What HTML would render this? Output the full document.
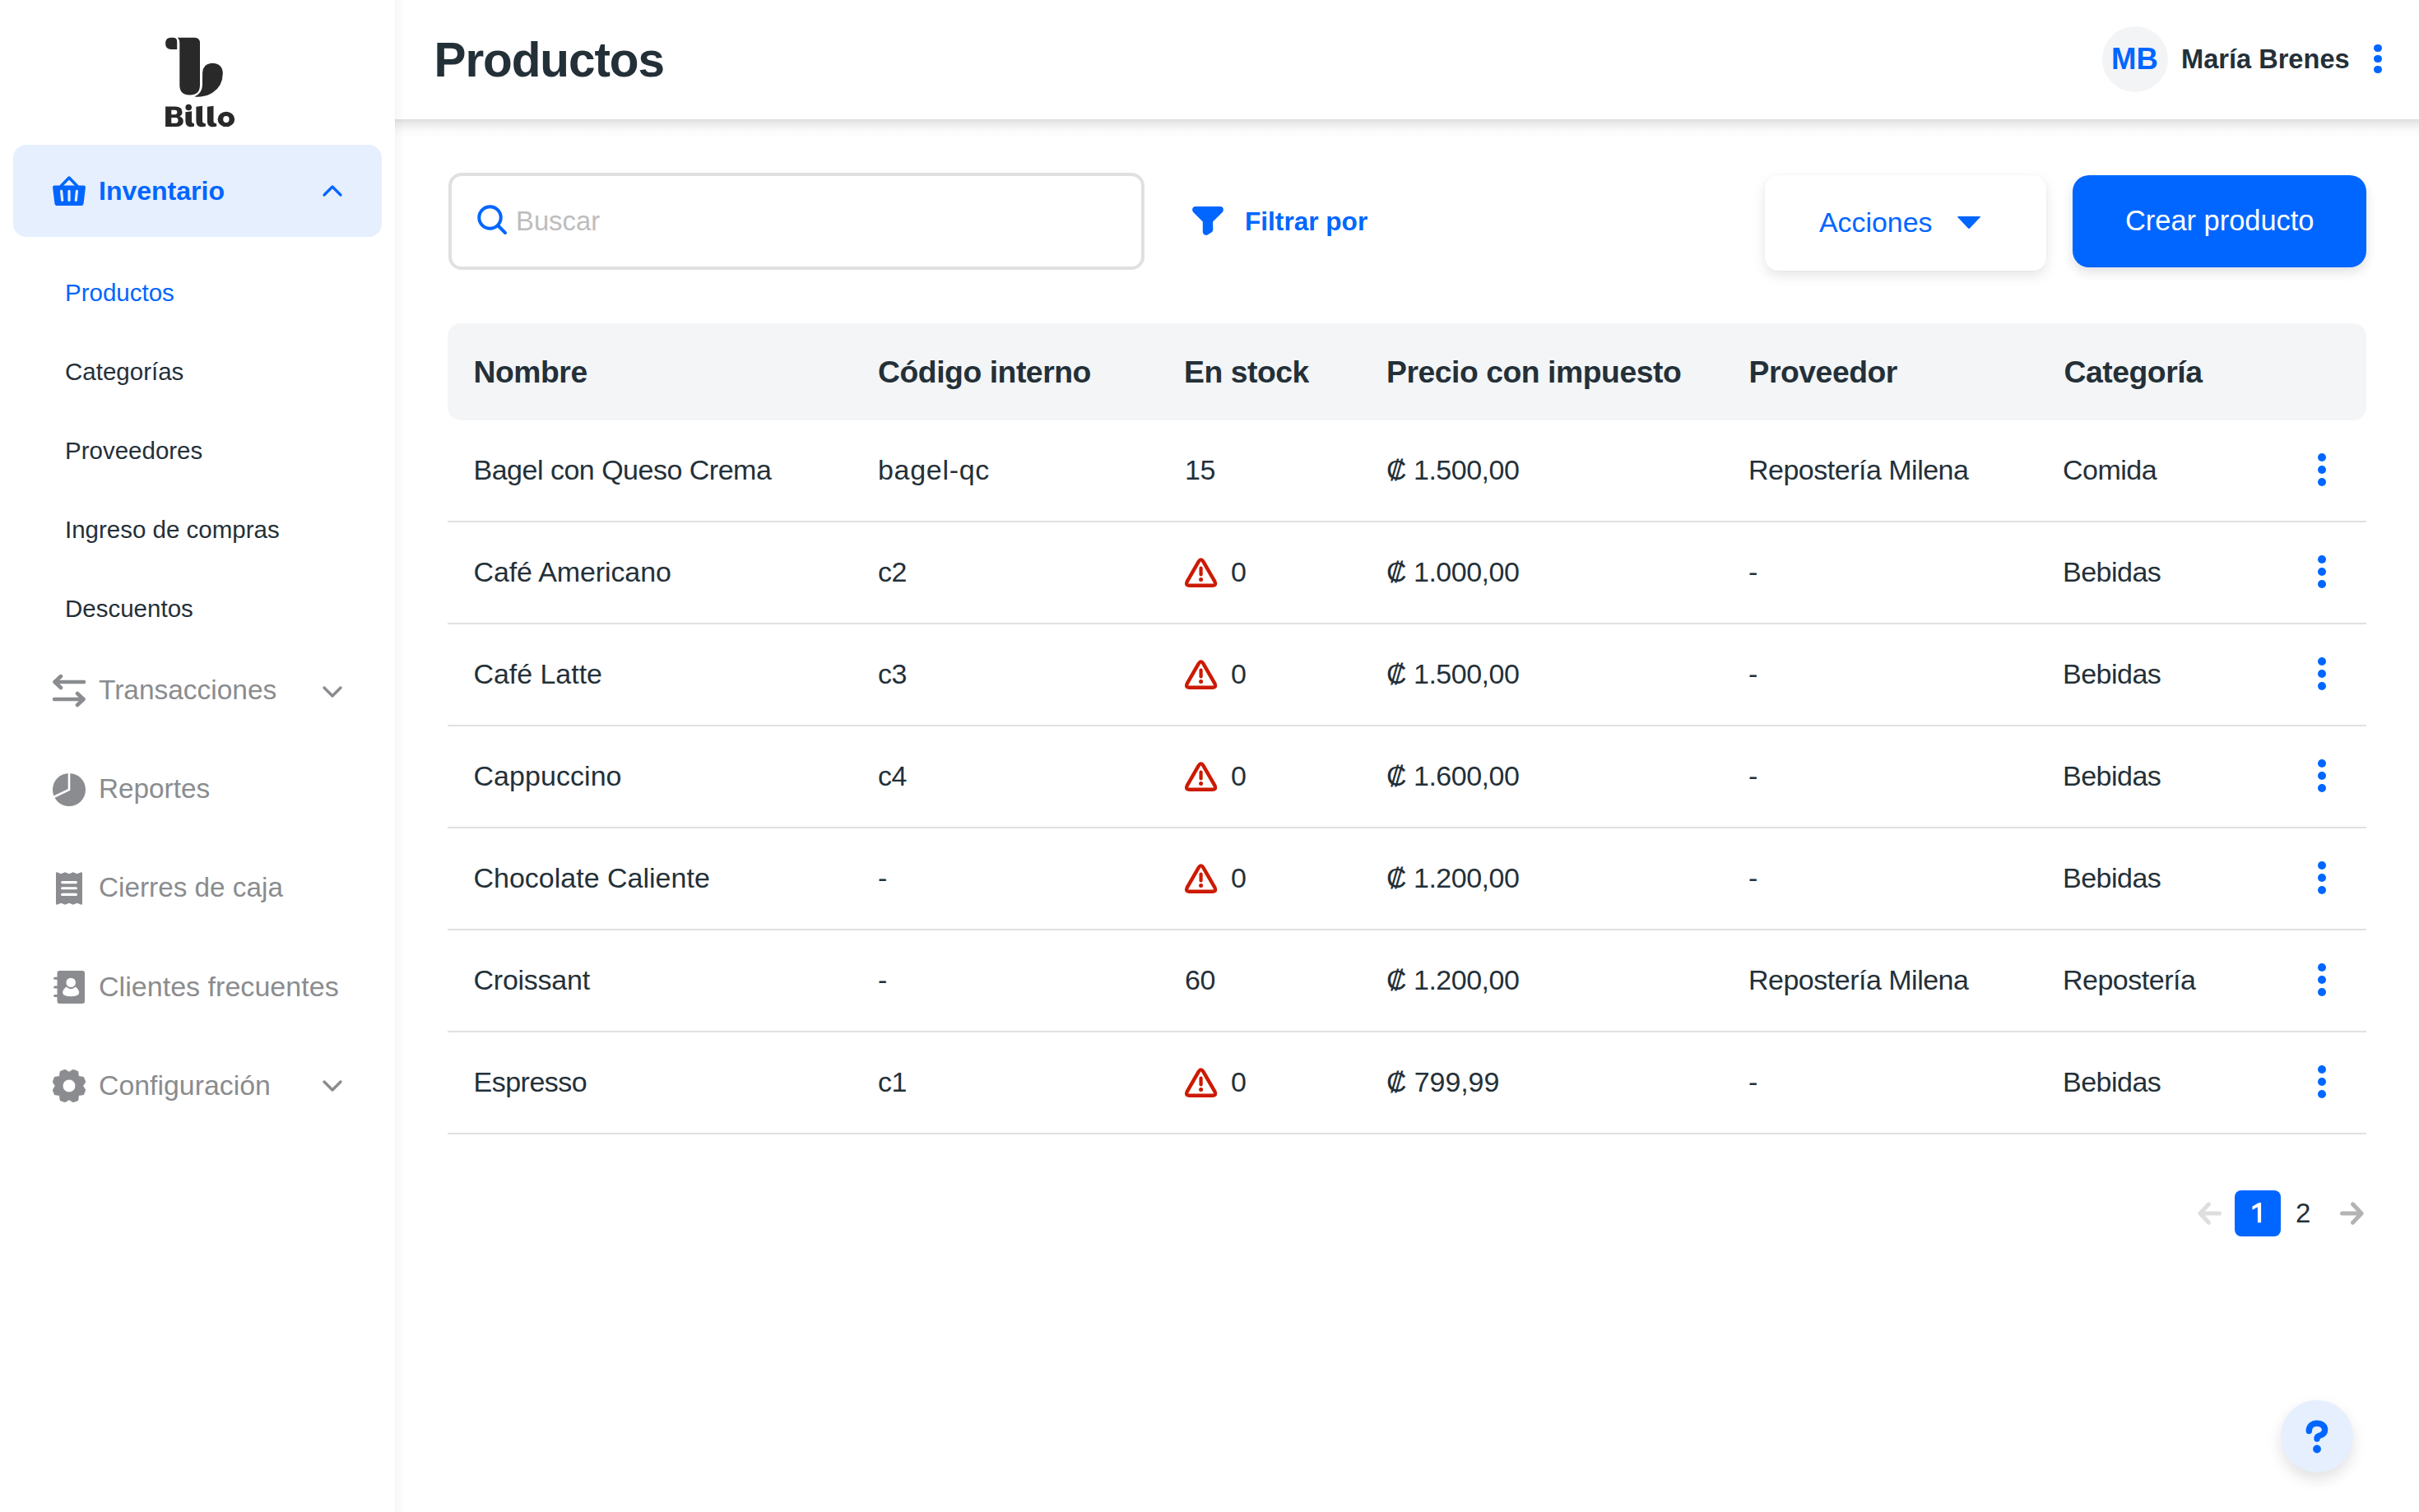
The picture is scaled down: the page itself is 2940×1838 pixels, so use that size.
<!DOCTYPE html>
<html><head><meta charset="utf-8"><title>Productos</title>
<style>
html,body{margin:0;padding:0;background:#fff;}
body{width:2940px;height:1838px;position:relative;overflow:hidden;font-family:"Liberation Sans",sans-serif;}
.abs{position:absolute;}
.t{position:absolute;white-space:nowrap;}
#sidebar{position:absolute;left:0;top:0;width:480px;height:1838px;background:#fff;}
#header{position:absolute;left:480px;top:0;width:2460px;height:145px;background:#fff;}
#hshadow{position:absolute;left:480px;top:145px;width:2460px;height:24px;background:linear-gradient(to bottom,rgba(0,0,0,0.135) 0px,rgba(0,0,0,0.078) 5px,rgba(0,0,0,0.043) 10px,rgba(0,0,0,0.02) 14px,rgba(0,0,0,0.006) 19px,rgba(0,0,0,0) 24px);}
@media (max-width:2000px){html{zoom:0.5;}}
#main-shadow{position:absolute;left:480px;top:0;width:12px;height:1838px;background:linear-gradient(to right,rgba(0,0,0,0.035),rgba(0,0,0,0));}
</style></head><body>
<div id="sidebar"></div>
<svg class="abs" style="left:190px;top:36px" width="110" height="90" viewBox="190 36 110 90">
<path fill="#292929" d="M215.2,60 L215.2,50.5 Q215.2,46 210.5,45.8 L207.5,45.8 Q201.1,46 201.1,52.8 Q201.1,60 208,60 Z"/>
<path fill="#292929" d="M215.4,45.8 L236.5,45.8 Q243,45.8 243,52.5 L243,103.3 Q243,115.6 230.6,115.6 Q218.3,115.6 218.3,103.3 L218.3,52.3 Q218.3,47.5 215.4,45.8 Z"/>
<path fill="#292929" d="M236.3,117.6 A15.4,15.4 0 0 0 246,103.3 L246.1,88.5 Q246.5,77 258,76.8 Q270.8,77.3 270.8,89.5 Q270.5,105 258.5,112.5 Q249,118.5 236.3,117.6 Z"/>
</svg>
<svg class="abs" style="left:195px;top:124px" width="95" height="34" viewBox="195 124 95 34">
<g fill="#292929" fill-rule="evenodd">
<path d="M201.1,129.5 H213 Q221.5,129.5 221.5,136.3 Q221.5,140 218.3,141.6 Q222.8,143.2 222.8,147.5 Q222.8,154.1 213.5,154.1 H201.1 Z M208.3,133.8 V139.2 H212.6 Q215.3,139.2 215.3,136.5 Q215.3,133.8 212.6,133.8 Z M208.3,142.9 V149.8 H213.6 Q216.5,149.8 216.5,146.3 Q216.5,142.9 213.6,142.9 Z"/>
<path d="M225.4,136.2 L233,135.3 V147.3 Q233,150 236,150.3 V153.6 Q233.5,154.5 230.8,154.2 Q225.4,153.5 225.4,147 Z"/>
<circle cx="229.2" cy="130.5" r="3.8"/>
<path d="M238.4,129.7 L246,128.7 V147.3 Q246,150 249.9,150.3 V153.6 Q247,154.5 243.8,154.2 Q238.4,153.5 238.4,147 Z"/>
<path d="M251.9,129.7 L259.5,128.7 V147.3 Q259.5,150 263.2,150.3 V153.6 Q260.5,154.5 257.3,154.2 Q251.9,153.5 251.9,147 Z"/>
<path d="M264.6,144.9 A10.3,9.2 0 1 0 285.2,144.9 A10.3,9.2 0 1 0 264.6,144.9 Z M271.2,145.1 A3.7,4.1 0 1 0 278.6,145.1 A3.7,4.1 0 1 0 271.2,145.1 Z"/>
</g></svg>
<div class="abs" style="left:16px;top:176px;width:448px;height:112px;border-radius:16px;background:#e6effd"></div>
<svg class="abs" style="left:64px;top:213px" width="40" height="38" viewBox="0 0 40 38">
<polyline points="10.3,13 20,3 29.7,13" fill="none" stroke="#0066ff" stroke-width="3.5" stroke-linecap="round" stroke-linejoin="round"/>
<path fill="#0066ff" d="M2.2,12.5 H37.8 Q40.2,12.5 39.9,14.9 L37.6,34.2 Q37.2,37 34.6,37 H5.4 Q2.8,37 2.4,34.2 L0.1,14.9 Q-0.2,12.5 2.2,12.5 Z"/>
<g stroke="#e6effd" stroke-width="3.2" stroke-linecap="round"><line x1="10.6" y1="19.4" x2="11.7" y2="30.3"/><line x1="20" y1="19.4" x2="20" y2="30.3"/><line x1="29.4" y1="19.4" x2="28.3" y2="30.3"/></g>
</svg>
<div class="t " style="left:120px;top:212.41px;font-size:32px;line-height:40px;font-weight:700;color:#0066ff;">Inventario</div>
<svg class="abs" style="left:388px;top:220px" width="32" height="24" viewBox="388 220 32 24"><polyline points="394,237 404,227 414,237" fill="none" stroke="#0066ff" stroke-width="3.2" stroke-linecap="round" stroke-linejoin="round"/></svg>
<div class="t " style="left:79px;top:337.27px;font-size:29.5px;line-height:37px;font-weight:400;color:#0066ff;">Productos</div>
<div class="t " style="left:79px;top:433.27px;font-size:29.5px;line-height:37px;font-weight:400;color:#243038;">Categorías</div>
<div class="t " style="left:79px;top:529.27px;font-size:29.5px;line-height:37px;font-weight:400;color:#243038;">Proveedores</div>
<div class="t " style="left:79px;top:625.27px;font-size:29.5px;line-height:37px;font-weight:400;color:#243038;">Ingreso de compras</div>
<div class="t " style="left:79px;top:721.27px;font-size:29.5px;line-height:37px;font-weight:400;color:#243038;">Descuentos</div>
<div class="t " style="left:120px;top:817.90px;font-size:33.46px;line-height:42px;font-weight:400;color:#8a8c8f;">Transacciones</div>
<div class="t " style="left:120px;top:938.46px;font-size:33.3px;line-height:42px;font-weight:400;color:#8a8c8f;">Reportes</div>
<div class="t " style="left:120px;top:1058.46px;font-size:33.3px;line-height:42px;font-weight:400;color:#8a8c8f;">Cierres de caja</div>
<div class="t " style="left:120px;top:1177.68px;font-size:34.1px;line-height:43px;font-weight:400;color:#8a8c8f;">Clientes frecuentes</div>
<div class="t " style="left:120px;top:1298.26px;font-size:33.87px;line-height:42px;font-weight:400;color:#8a8c8f;">Configuración</div>
<svg class="abs" style="left:388px;top:828.5px" width="32" height="24" viewBox="0 0 32 24"><polyline points="6,7 16,17 26,7" fill="none" stroke="#8a8c8f" stroke-width="3.4" stroke-linecap="round" stroke-linejoin="round"/></svg>
<svg class="abs" style="left:388px;top:1308px" width="32" height="24" viewBox="0 0 32 24"><polyline points="6,7 16,17 26,7" fill="none" stroke="#8a8c8f" stroke-width="3.4" stroke-linecap="round" stroke-linejoin="round"/></svg>
<svg class="abs" style="left:64px;top:820px" width="40" height="40" viewBox="0 0 40 40">
<g fill="none" stroke="#8a8c8f" stroke-width="4.6" stroke-linecap="round" stroke-linejoin="round">
<path d="M38,9 H3 M10,2 L2.5,9 L10,16"/><path d="M2,30 H37 M30,23 L37.5,30 L30,37"/></g></svg>
<svg class="abs" style="left:64px;top:940px" width="40" height="40" viewBox="0 0 40 40">
<circle cx="20" cy="20" r="20" fill="#8a8c8f"/>
<path d="M20,-1 V20 L1,29" fill="none" stroke="#fff" stroke-width="2.6" stroke-linejoin="miter"/></svg>
<svg class="abs" style="left:68px;top:1060px" width="32" height="40" viewBox="0 0 32 40">
<path fill="#8a8c8f" d="M0,1.6 Q0,0.2 1.3,0.3 L6.2,2.3 L11,0.3 L16,2.3 L20.8,0.3 L25.7,2.3 L30.6,0.3 Q32,0.2 32,1.6 V38.4 Q32,39.8 30.6,39.7 L25.7,37.7 L20.8,39.7 L16,37.7 L11,39.7 L6.2,37.7 L1.3,39.7 Q0,39.8 0,38.4 Z"/>
<g stroke="#fff" stroke-width="3.1" stroke-linecap="round"><line x1="7.6" y1="12.6" x2="24.4" y2="12.6"/><line x1="7.6" y1="19.8" x2="24.4" y2="19.8"/><line x1="7.6" y1="27.4" x2="24.4" y2="27.4"/></g></svg>
<svg class="abs" style="left:64px;top:1179px" width="40" height="42" viewBox="0 0 40 42">
<rect x="5.5" y="1" width="33.5" height="40" rx="3" fill="#8a8c8f"/>
<g stroke="#8a8c8f" stroke-width="3" stroke-linecap="round"><line x1="2.6" y1="10.3" x2="7" y2="10.3"/><line x1="2.6" y1="20.9" x2="7" y2="20.9"/><line x1="2.6" y1="31.6" x2="7" y2="31.6"/></g>
<circle cx="22.2" cy="15.4" r="5.7" fill="#fff"/>
<path fill="#fff" d="M16.7,20.6 Q19,23.2 22.2,23.2 Q25.4,23.2 27.7,20.6 Q32.1,24 32.2,27.6 Q32,32.3 22.2,32.3 Q12.3,32.3 12.1,27.6 Q12.3,24 16.7,20.6 Z"/></svg>
<svg class="abs" style="left:64px;top:1300px" width="40" height="40" viewBox="-20 -20 40 40">
<path fill="#8a8c8f" fill-rule="evenodd" stroke="#8a8c8f" stroke-width="0.8" stroke-linejoin="round" d="M-5.0,-19.8 L0,-16.85 L4.8,-19.8 L10.8,-17.5 L11.5,-11.5 L17.5,-10.7 L19.9,-4.8 L16.7,0 L19.9,5.0 L17.5,10.7 L11.5,11.5 L10.8,17.7 L4.8,19.8 L0,16.85 L-5.0,19.8 L-10.8,17.7 L-11.7,11.5 L-17.7,10.7 L-19.8,5.0 L-16.85,0 L-19.8,-4.8 L-17.7,-10.7 L-11.7,-11.5 L-10.8,-17.5 Z M0,-7.9 A7.9,7.9 0 1 0 0,7.9 A7.9,7.9 0 1 0 0,-7.9 Z"/></svg>
<div id="header"></div><div id="hshadow"></div><div id="main-shadow"></div>
<div class="t " style="left:527.5px;top:35.72px;font-size:58.5px;line-height:73px;font-weight:700;color:#243038;letter-spacing:-1.1px;">Productos</div>
<div class="abs" style="left:2555px;top:32px;width:80px;height:80px;border-radius:50%;background:#f3f4f6"></div>
<div class="t " style="left:2566px;top:49.35px;font-size:36.5px;line-height:46px;font-weight:700;color:#0066ff;letter-spacing:0px;">MB</div>
<div class="t " style="left:2651px;top:51.20px;font-size:32.6px;line-height:41px;font-weight:700;color:#243038;">María Brenes</div>
<div class="abs" style="left:2885.25px;top:53.55px;width:9.5px;height:9.5px;border-radius:50%;background:#0066ff"></div>
<div class="abs" style="left:2885.25px;top:66.55px;width:9.5px;height:9.5px;border-radius:50%;background:#0066ff"></div>
<div class="abs" style="left:2885.25px;top:79.85px;width:9.5px;height:9.5px;border-radius:50%;background:#0066ff"></div>
<div class="abs" style="left:544.5px;top:210px;width:846.5px;height:118px;box-sizing:border-box;border:4px solid #e0e0e0;border-radius:16px;background:#fff"></div>
<svg class="abs" style="left:578px;top:247px" width="40" height="40" viewBox="0 0 40 40">
<circle cx="17.5" cy="17.5" r="13.2" fill="none" stroke="#0066ff" stroke-width="4"/>
<line x1="27.5" y1="27.5" x2="36" y2="36" stroke="#0066ff" stroke-width="4" stroke-linecap="round"/></svg>
<div class="t " style="left:627px;top:248.13px;font-size:32.8px;line-height:41px;font-weight:400;color:#bdbdbd;">Buscar</div>
<svg class="abs" style="left:1445px;top:248px" width="46" height="42" viewBox="1445 248 46 42">
<path fill="#0066ff" d="M1452.8,251.1 H1483.2 Q1486.8,251.4 1486.9,255 Q1486.8,257 1485.2,258.6 L1474.1,269.4 L1474.3,279 Q1474.3,281.2 1472.4,282.6 L1467.6,285.5 Q1465.8,286.3 1464.2,285.6 Q1461.8,284.6 1461.8,282 V269.4 L1450.8,258.6 Q1449.2,257 1449.1,255 Q1449.3,251.4 1452.8,251.1 Z"/></svg>
<div class="t " style="left:1513px;top:249.04px;font-size:31.6px;line-height:40px;font-weight:700;color:#0066ff;">Filtrar por</div>
<div class="abs" style="left:2145px;top:212.5px;width:342px;height:116.5px;border-radius:16px;background:#fff;box-shadow:0 6px 16px rgba(0,0,0,0.10), 0 0 3px rgba(0,0,0,0.04)"></div>
<div class="t " style="left:2211px;top:249.25px;font-size:33.9px;line-height:42px;font-weight:400;color:#0066ff;">Acciones</div>
<svg class="abs" style="left:2377px;top:261px" width="32" height="20" viewBox="0 0 32 20"><path d="M3,2 H29 Q30.5,2 29.5,3.3 L17.2,16.3 Q16,17.5 14.8,16.3 L2.5,3.3 Q1.5,2 3,2 Z" fill="#0066ff"/></svg>
<div class="abs" style="left:2519px;top:213px;width:357px;height:112px;border-radius:20px;background:#0066ff;box-shadow:0 6px 14px rgba(0,0,0,0.12)"></div>
<div class="t " style="left:2583px;top:246.57px;font-size:34.4px;line-height:43px;font-weight:400;color:#fff;">Crear producto</div>
<div class="abs" style="left:544px;top:393px;width:2332px;height:117.5px;border-radius:16px;background:#f3f5f7"></div>
<div class="t " style="left:575.5px;top:428.57px;font-size:37.3px;line-height:47px;font-weight:700;color:#243038;letter-spacing:-0.45px;">Nombre</div>
<div class="t " style="left:1067px;top:428.57px;font-size:37.3px;line-height:47px;font-weight:700;color:#243038;letter-spacing:-0.45px;">Código interno</div>
<div class="t " style="left:1439px;top:428.57px;font-size:37.3px;line-height:47px;font-weight:700;color:#243038;letter-spacing:-0.45px;">En stock</div>
<div class="t " style="left:1685px;top:428.57px;font-size:37.3px;line-height:47px;font-weight:700;color:#243038;letter-spacing:-0.45px;">Precio con impuesto</div>
<div class="t " style="left:2125.5px;top:428.57px;font-size:37.3px;line-height:47px;font-weight:700;color:#243038;letter-spacing:-0.45px;">Proveedor</div>
<div class="t " style="left:2508.5px;top:428.57px;font-size:37.3px;line-height:47px;font-weight:700;color:#243038;letter-spacing:-0.45px;">Categoría</div>
<div class="t " style="left:575.5px;top:550.21px;font-size:34px;line-height:42px;font-weight:400;color:#243038;letter-spacing:-0.50px;">Bagel con Queso Crema</div>
<div class="t " style="left:1067px;top:550.21px;font-size:34px;line-height:42px;font-weight:400;color:#243038;letter-spacing:0.7px;">bagel-qc</div>
<div class="t " style="left:1440px;top:550.21px;font-size:34px;line-height:42px;font-weight:400;color:#243038;letter-spacing:-0.5px;">15</div>
<div class="t " style="left:1685px;top:550.21px;font-size:34px;line-height:42px;font-weight:400;color:#243038;letter-spacing:-0.5px;">₡ 1.500,00</div>
<div class="t " style="left:2125px;top:550.21px;font-size:34px;line-height:42px;font-weight:400;color:#243038;letter-spacing:-0.5px;">Repostería Milena</div>
<div class="t " style="left:2507px;top:550.21px;font-size:34px;line-height:42px;font-weight:400;color:#243038;letter-spacing:-0.5px;">Comida</div>
<div class="abs" style="left:2817px;top:551px;width:10px;height:10px;border-radius:50%;background:#0066ff"></div>
<div class="abs" style="left:2817px;top:566px;width:10px;height:10px;border-radius:50%;background:#0066ff"></div>
<div class="abs" style="left:2817px;top:581px;width:10px;height:10px;border-radius:50%;background:#0066ff"></div>
<div class="abs" style="left:544px;top:633px;width:2332px;height:2px;background:#e0e0e0"></div>
<div class="t " style="left:575.5px;top:674.21px;font-size:34px;line-height:42px;font-weight:400;color:#243038;letter-spacing:-0.12px;">Café Americano</div>
<div class="t " style="left:1067px;top:674.21px;font-size:34px;line-height:42px;font-weight:400;color:#243038;letter-spacing:-0.5px;">c2</div>
<svg class="abs" style="left:1437px;top:676px" width="46" height="40" viewBox="0 0 46 40">
<path d="M19.8,6.6 Q22.6,2.2 25.4,6.6 L39.4,30.9 Q41.6,35.8 37,35.8 H8.2 Q3.6,35.8 5.8,30.9 Z" fill="none" stroke="#cc1a00" stroke-width="4.4" stroke-linejoin="round"/>
<line x1="22.6" y1="14.6" x2="22.6" y2="22.4" stroke="#cc1a00" stroke-width="4.2" stroke-linecap="round"/><circle cx="22.6" cy="28.6" r="2.5" fill="#cc1a00"/></svg>
<div class="t " style="left:1496px;top:674.21px;font-size:34px;line-height:42px;font-weight:400;color:#243038;">0</div>
<div class="t " style="left:1685px;top:674.21px;font-size:34px;line-height:42px;font-weight:400;color:#243038;letter-spacing:-0.5px;">₡ 1.000,00</div>
<div class="t " style="left:2125px;top:674.21px;font-size:34px;line-height:42px;font-weight:400;color:#243038;letter-spacing:-0.5px;">-</div>
<div class="t " style="left:2507px;top:674.21px;font-size:34px;line-height:42px;font-weight:400;color:#243038;letter-spacing:-0.5px;">Bebidas</div>
<div class="abs" style="left:2817px;top:675px;width:10px;height:10px;border-radius:50%;background:#0066ff"></div>
<div class="abs" style="left:2817px;top:690px;width:10px;height:10px;border-radius:50%;background:#0066ff"></div>
<div class="abs" style="left:2817px;top:705px;width:10px;height:10px;border-radius:50%;background:#0066ff"></div>
<div class="abs" style="left:544px;top:757px;width:2332px;height:2px;background:#e0e0e0"></div>
<div class="t " style="left:575.5px;top:798.21px;font-size:34px;line-height:42px;font-weight:400;color:#243038;letter-spacing:-0.05px;">Café Latte</div>
<div class="t " style="left:1067px;top:798.21px;font-size:34px;line-height:42px;font-weight:400;color:#243038;letter-spacing:-0.5px;">c3</div>
<svg class="abs" style="left:1437px;top:800px" width="46" height="40" viewBox="0 0 46 40">
<path d="M19.8,6.6 Q22.6,2.2 25.4,6.6 L39.4,30.9 Q41.6,35.8 37,35.8 H8.2 Q3.6,35.8 5.8,30.9 Z" fill="none" stroke="#cc1a00" stroke-width="4.4" stroke-linejoin="round"/>
<line x1="22.6" y1="14.6" x2="22.6" y2="22.4" stroke="#cc1a00" stroke-width="4.2" stroke-linecap="round"/><circle cx="22.6" cy="28.6" r="2.5" fill="#cc1a00"/></svg>
<div class="t " style="left:1496px;top:798.21px;font-size:34px;line-height:42px;font-weight:400;color:#243038;">0</div>
<div class="t " style="left:1685px;top:798.21px;font-size:34px;line-height:42px;font-weight:400;color:#243038;letter-spacing:-0.5px;">₡ 1.500,00</div>
<div class="t " style="left:2125px;top:798.21px;font-size:34px;line-height:42px;font-weight:400;color:#243038;letter-spacing:-0.5px;">-</div>
<div class="t " style="left:2507px;top:798.21px;font-size:34px;line-height:42px;font-weight:400;color:#243038;letter-spacing:-0.5px;">Bebidas</div>
<div class="abs" style="left:2817px;top:799px;width:10px;height:10px;border-radius:50%;background:#0066ff"></div>
<div class="abs" style="left:2817px;top:814px;width:10px;height:10px;border-radius:50%;background:#0066ff"></div>
<div class="abs" style="left:2817px;top:829px;width:10px;height:10px;border-radius:50%;background:#0066ff"></div>
<div class="abs" style="left:544px;top:881px;width:2332px;height:2px;background:#e0e0e0"></div>
<div class="t " style="left:575.5px;top:922.21px;font-size:34px;line-height:42px;font-weight:400;color:#243038;letter-spacing:0.05px;">Cappuccino</div>
<div class="t " style="left:1067px;top:922.21px;font-size:34px;line-height:42px;font-weight:400;color:#243038;letter-spacing:-0.5px;">c4</div>
<svg class="abs" style="left:1437px;top:924px" width="46" height="40" viewBox="0 0 46 40">
<path d="M19.8,6.6 Q22.6,2.2 25.4,6.6 L39.4,30.9 Q41.6,35.8 37,35.8 H8.2 Q3.6,35.8 5.8,30.9 Z" fill="none" stroke="#cc1a00" stroke-width="4.4" stroke-linejoin="round"/>
<line x1="22.6" y1="14.6" x2="22.6" y2="22.4" stroke="#cc1a00" stroke-width="4.2" stroke-linecap="round"/><circle cx="22.6" cy="28.6" r="2.5" fill="#cc1a00"/></svg>
<div class="t " style="left:1496px;top:922.21px;font-size:34px;line-height:42px;font-weight:400;color:#243038;">0</div>
<div class="t " style="left:1685px;top:922.21px;font-size:34px;line-height:42px;font-weight:400;color:#243038;letter-spacing:-0.5px;">₡ 1.600,00</div>
<div class="t " style="left:2125px;top:922.21px;font-size:34px;line-height:42px;font-weight:400;color:#243038;letter-spacing:-0.5px;">-</div>
<div class="t " style="left:2507px;top:922.21px;font-size:34px;line-height:42px;font-weight:400;color:#243038;letter-spacing:-0.5px;">Bebidas</div>
<div class="abs" style="left:2817px;top:923px;width:10px;height:10px;border-radius:50%;background:#0066ff"></div>
<div class="abs" style="left:2817px;top:938px;width:10px;height:10px;border-radius:50%;background:#0066ff"></div>
<div class="abs" style="left:2817px;top:953px;width:10px;height:10px;border-radius:50%;background:#0066ff"></div>
<div class="abs" style="left:544px;top:1005px;width:2332px;height:2px;background:#e0e0e0"></div>
<div class="t " style="left:575.5px;top:1046.21px;font-size:34px;line-height:42px;font-weight:400;color:#243038;letter-spacing:0.00px;">Chocolate Caliente</div>
<div class="t " style="left:1067px;top:1046.21px;font-size:34px;line-height:42px;font-weight:400;color:#243038;letter-spacing:-0.5px;">-</div>
<svg class="abs" style="left:1437px;top:1048px" width="46" height="40" viewBox="0 0 46 40">
<path d="M19.8,6.6 Q22.6,2.2 25.4,6.6 L39.4,30.9 Q41.6,35.8 37,35.8 H8.2 Q3.6,35.8 5.8,30.9 Z" fill="none" stroke="#cc1a00" stroke-width="4.4" stroke-linejoin="round"/>
<line x1="22.6" y1="14.6" x2="22.6" y2="22.4" stroke="#cc1a00" stroke-width="4.2" stroke-linecap="round"/><circle cx="22.6" cy="28.6" r="2.5" fill="#cc1a00"/></svg>
<div class="t " style="left:1496px;top:1046.21px;font-size:34px;line-height:42px;font-weight:400;color:#243038;">0</div>
<div class="t " style="left:1685px;top:1046.21px;font-size:34px;line-height:42px;font-weight:400;color:#243038;letter-spacing:-0.5px;">₡ 1.200,00</div>
<div class="t " style="left:2125px;top:1046.21px;font-size:34px;line-height:42px;font-weight:400;color:#243038;letter-spacing:-0.5px;">-</div>
<div class="t " style="left:2507px;top:1046.21px;font-size:34px;line-height:42px;font-weight:400;color:#243038;letter-spacing:-0.5px;">Bebidas</div>
<div class="abs" style="left:2817px;top:1047px;width:10px;height:10px;border-radius:50%;background:#0066ff"></div>
<div class="abs" style="left:2817px;top:1062px;width:10px;height:10px;border-radius:50%;background:#0066ff"></div>
<div class="abs" style="left:2817px;top:1077px;width:10px;height:10px;border-radius:50%;background:#0066ff"></div>
<div class="abs" style="left:544px;top:1129px;width:2332px;height:2px;background:#e0e0e0"></div>
<div class="t " style="left:575.5px;top:1170.21px;font-size:34px;line-height:42px;font-weight:400;color:#243038;letter-spacing:-0.25px;">Croissant</div>
<div class="t " style="left:1067px;top:1170.21px;font-size:34px;line-height:42px;font-weight:400;color:#243038;letter-spacing:-0.5px;">-</div>
<div class="t " style="left:1440px;top:1170.21px;font-size:34px;line-height:42px;font-weight:400;color:#243038;letter-spacing:-0.5px;">60</div>
<div class="t " style="left:1685px;top:1170.21px;font-size:34px;line-height:42px;font-weight:400;color:#243038;letter-spacing:-0.5px;">₡ 1.200,00</div>
<div class="t " style="left:2125px;top:1170.21px;font-size:34px;line-height:42px;font-weight:400;color:#243038;letter-spacing:-0.5px;">Repostería Milena</div>
<div class="t " style="left:2507px;top:1170.21px;font-size:34px;line-height:42px;font-weight:400;color:#243038;letter-spacing:-0.5px;">Repostería</div>
<div class="abs" style="left:2817px;top:1171px;width:10px;height:10px;border-radius:50%;background:#0066ff"></div>
<div class="abs" style="left:2817px;top:1186px;width:10px;height:10px;border-radius:50%;background:#0066ff"></div>
<div class="abs" style="left:2817px;top:1201px;width:10px;height:10px;border-radius:50%;background:#0066ff"></div>
<div class="abs" style="left:544px;top:1253px;width:2332px;height:2px;background:#e0e0e0"></div>
<div class="t " style="left:575.5px;top:1294.21px;font-size:34px;line-height:42px;font-weight:400;color:#243038;letter-spacing:-0.50px;">Espresso</div>
<div class="t " style="left:1067px;top:1294.21px;font-size:34px;line-height:42px;font-weight:400;color:#243038;letter-spacing:-0.5px;">c1</div>
<svg class="abs" style="left:1437px;top:1296px" width="46" height="40" viewBox="0 0 46 40">
<path d="M19.8,6.6 Q22.6,2.2 25.4,6.6 L39.4,30.9 Q41.6,35.8 37,35.8 H8.2 Q3.6,35.8 5.8,30.9 Z" fill="none" stroke="#cc1a00" stroke-width="4.4" stroke-linejoin="round"/>
<line x1="22.6" y1="14.6" x2="22.6" y2="22.4" stroke="#cc1a00" stroke-width="4.2" stroke-linecap="round"/><circle cx="22.6" cy="28.6" r="2.5" fill="#cc1a00"/></svg>
<div class="t " style="left:1496px;top:1294.21px;font-size:34px;line-height:42px;font-weight:400;color:#243038;">0</div>
<div class="t " style="left:1685px;top:1294.21px;font-size:34px;line-height:42px;font-weight:400;color:#243038;letter-spacing:-0.1px;">₡ 799,99</div>
<div class="t " style="left:2125px;top:1294.21px;font-size:34px;line-height:42px;font-weight:400;color:#243038;letter-spacing:-0.5px;">-</div>
<div class="t " style="left:2507px;top:1294.21px;font-size:34px;line-height:42px;font-weight:400;color:#243038;letter-spacing:-0.5px;">Bebidas</div>
<div class="abs" style="left:2817px;top:1295px;width:10px;height:10px;border-radius:50%;background:#0066ff"></div>
<div class="abs" style="left:2817px;top:1310px;width:10px;height:10px;border-radius:50%;background:#0066ff"></div>
<div class="abs" style="left:2817px;top:1325px;width:10px;height:10px;border-radius:50%;background:#0066ff"></div>
<div class="abs" style="left:544px;top:1377px;width:2332px;height:2px;background:#e0e0e0"></div>
<svg class="abs" style="left:2668px;top:1457px" width="36" height="36" viewBox="0 0 36 36"><path d="M29.5,18 H6.5 M16.5,6.8 L5.8,18 L16.5,29.2" fill="none" stroke="#dedede" stroke-width="5" stroke-linecap="round" stroke-linejoin="round"/></svg>
<div class="abs" style="left:2716px;top:1447px;width:56px;height:56px;border-radius:8px;background:#0066ff"></div>
<svg class="abs" style="left:2730px;top:1455px" width="30" height="36" viewBox="2730 1455 30 36"><path fill="#fff" d="M2737.5,1466.4 L2745.4,1462.1 H2748.1 V1486.25 H2743.9 V1467.3 L2737.5,1470.7 Z"/></svg>
<div class="t " style="left:2790px;top:1454.06px;font-size:33px;line-height:41px;font-weight:400;color:#243038;">2</div>
<svg class="abs" style="left:2840px;top:1457px" width="36" height="36" viewBox="0 0 36 36"><path d="M6.5,18 H29.5 M19.5,6.8 L30.2,18 L19.5,29.2" fill="none" stroke="#b3b3b3" stroke-width="5" stroke-linecap="round" stroke-linejoin="round"/></svg>
<div class="abs" style="left:2772px;top:1702px;width:88px;height:88px;border-radius:50%;background:#e6effd;box-shadow:0 8px 18px rgba(0,0,0,0.12)"></div>
<svg class="abs" style="left:2796px;top:1716px" width="44" height="56" viewBox="0 0 44 56">
<path d="M10.3,23.5 C10.3,17.5 14.5,14.2 20,14.2 C25.6,14.2 29.6,17.6 29.6,22 C29.6,26.5 26,28.5 22.5,29.5 Q20,30.3 20,33" fill="none" stroke="#0066ff" stroke-width="7.4" stroke-linecap="round" stroke-linejoin="round"/>
<circle cx="20" cy="45.5" r="4.9" fill="#0066ff"/></svg>
</body></html>
